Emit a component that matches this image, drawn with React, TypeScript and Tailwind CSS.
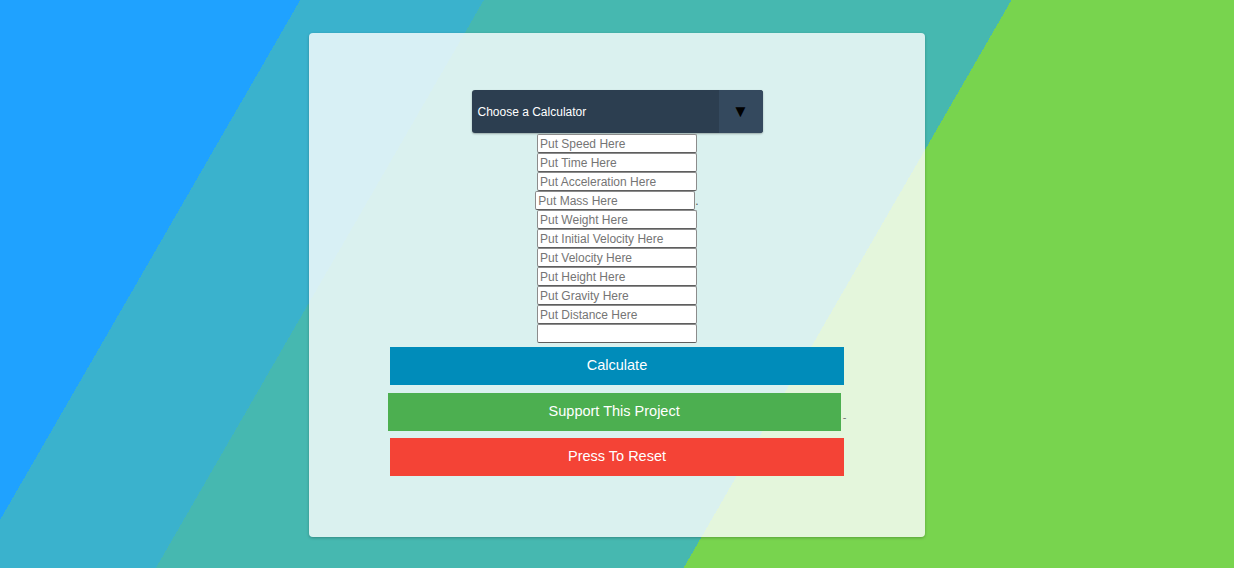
import React from 'react';

const fields = [
  'Put Speed Here',
  'Put Time Here',
  'Put Acceleration Here',
  'Put Mass Here',
  'Put Weight Here',
  'Put Initial Velocity Here',
  'Put Velocity Here',
  'Put Height Here',
  'Put Gravity Here',
  'Put Distance Here',
  '',
];

function Field({ placeholder }: { placeholder: string }) {
  return (
    <input
      type="text"
      placeholder={placeholder}
      className="w-[160px] h-[19px] px-[2px] bg-white border border-[#8c8c8c] border-b-[#5e5e5e] rounded-[2px] text-[12px] text-black placeholder:text-[#757575] outline-none"
    />
  );
}

export default function App() {
  return (
    <div
      className="w-full h-[568px] overflow-hidden flex justify-center pt-[33px] bg-[linear-gradient(120deg,#1fa2ff_260px,#3ab2cd_260px,#3ab2cd_419px,#46b8b0_419px,#46b8b0_876px,#78d44e_876px)]"
      style={{ fontFamily: '"Liberation Sans", Arial, sans-serif' }}
    >
      <div className="w-[616px] h-[504px] bg-white/80 rounded-[4px] shadow-[0_1px_3px_rgba(0,0,0,0.25)] flex flex-col items-center pt-[57px]">
        {/* calculator picker */}
        <div className="w-[291px] h-[43px] flex rounded-[3px] bg-[#2c3e50] shadow-[0_1px_2px_rgba(0,0,0,0.3)] overflow-hidden">
          <div className="flex-1 flex items-center pl-[6px] text-[12px] text-white">Choose a Calculator</div>
          <div className="w-[44px] flex items-center justify-center bg-[#34495e] text-black text-[17px] leading-none">▼</div>
        </div>

        {/* inputs */}
        <div className="mt-[1px] flex flex-col items-center">
          {fields.map((f) =>
            f === 'Put Mass Here' ? (
              <div key={f} className="flex items-baseline">
                <Field placeholder={f} />
                <span className="text-[12px] text-[#555]">.</span>
              </div>
            ) : (
              <Field key={f || 'blank'} placeholder={f} />
            )
          )}
        </div>

        <button className="mt-[4px] w-[454px] h-[38px] bg-[#008cba] text-white text-[14.5px]">Calculate</button>
        <div className="mt-[8px] flex items-center">
          <button className="w-[453px] h-[38px] bg-[#4caf50] text-white text-[14.5px]">Support This Project</button>
          <span className="ml-[2px] mt-[10px] text-[11px] leading-none text-[#777]">-</span>
        </div>
        <button className="mt-[7px] w-[454px] h-[38px] bg-[#f44336] text-white text-[14.5px]">Press To Reset</button>
      </div>
    </div>
  );
}
